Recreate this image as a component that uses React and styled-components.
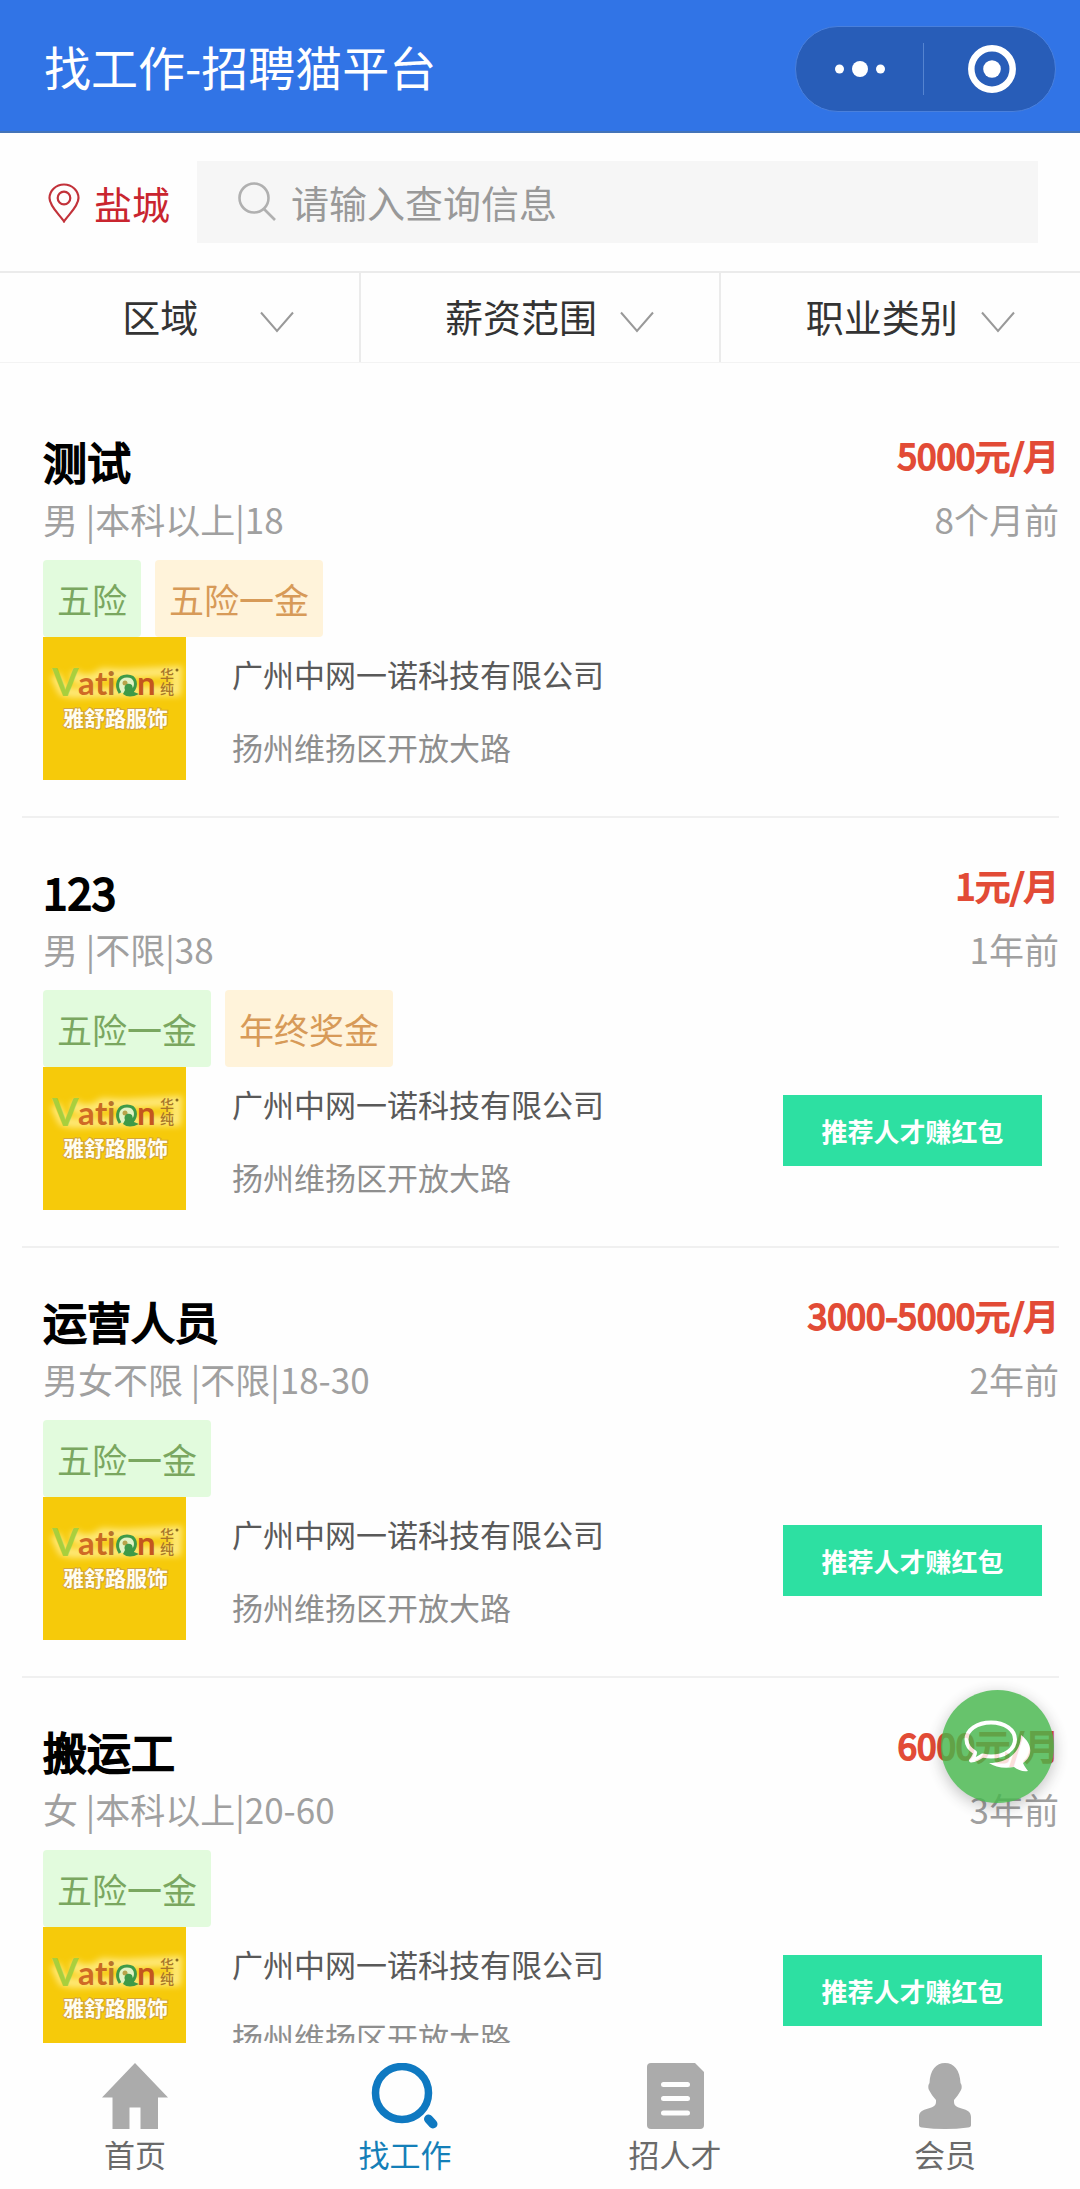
import React from 'react';
import styled, { createGlobalStyle } from 'styled-components';

const GlobalStyle = createGlobalStyle`
  * {
    box-sizing: border-box;
  }

  body {
    margin: 0;
    background-color: #fefefe;
    font-family: 'Noto Sans CJK SC', 'Noto Sans', sans-serif;
  }

  button, input {
    font-family: inherit;
  }
`;

const Page = styled.div`
  display: flex;
  flex-direction: column;
  height: 100vh;
  overflow: hidden;
`;

const Header = styled.header`
  display: flex;
  flex-shrink: 0;
  align-items: center;
  justify-content: space-between;
  height: 133px;
  padding: 0 24px 0 44px;
  background-color: #3174e6;
  border-bottom: 2px solid #4373b8;
`;

const HeaderTitle = styled.h1`
  margin: 0;
  color: #fff;
  font-size: 47px;
  font-weight: 400;
  line-height: 64px;
`;

const Capsule = styled.div`
  display: flex;
  align-items: center;
  width: 261px;
  height: 86px;
  margin-top: 6px;
  background-color: #285db8;
  border: 1px solid #4a80dc;
  border-radius: 43px;
`;

const CapsuleButton = styled.button`
  display: flex;
  flex: 1;
  align-items: center;
  justify-content: center;
  height: 52px;
  padding: 0;
  background: none;
  border: none;
  cursor: pointer;

  & + & {
    padding-left: 4px;
    border-left: 1px solid #5584d0;
  }
`;

const SearchBar = styled.div`
  display: flex;
  flex-shrink: 0;
  align-items: center;
  height: 138px;
  padding: 0 42px 0 48px;
`;

const City = styled.button`
  display: flex;
  align-items: center;
  gap: 14px;
  width: 149px;
  padding: 2px 0 0;
  background: none;
  border: none;
  color: #c9252f;
  font-size: 38px;
  line-height: 56px;
  cursor: pointer;
`;

const SearchBox = styled.label`
  display: flex;
  flex: 1;
  align-items: center;
  gap: 14px;
  height: 82px;
  padding: 0 40px 2px;
  background-color: #f6f6f6;
`;

const SearchInput = styled.input`
  flex: 1;
  min-width: 0;
  height: 56px;
  padding: 0;
  background: none;
  border: none;
  outline: none;
  color: #333;
  font-size: 38px;

  &::placeholder {
    color: #999;
    opacity: 1;
  }
`;

const Filters = styled.div`
  display: flex;
  flex-shrink: 0;
  height: 92px;
  border-top: 2px solid #ebebeb;
  border-bottom: 1px solid #f3f3f3;
`;

const FilterButton = styled.button`
  display: flex;
  flex: 1;
  align-items: center;
  padding: 0 65px 4px 61px;
  background: none;
  border: none;
  color: #333;
  font-size: 38px;
  line-height: 56px;
  cursor: pointer;

  &:not(:last-child) {
    border-right: 2px solid #ebebeb;
  }
`;

const FilterLabel = styled.span`
  flex: 1;
  text-align: center;
  white-space: nowrap;
`;

const JobList = styled.main`
  flex: 1;
  min-height: 0;
  padding: 25px 21px 0 22px;
  overflow-y: auto;
  scrollbar-width: none;
`;

const JobCard = styled.article`
  padding: 38px 0 36px 21px;
  border-bottom: 2px solid #f0f0f0;
`;

const JobTop = styled.div`
  display: flex;
  justify-content: space-between;
  margin-bottom: 6px;
`;

const JobTitle = styled.h2`
  margin: 0;
  color: #000;
  font-size: 44px;
  font-weight: 400;
  line-height: 70px;
  -webkit-text-stroke: 2px #000;
`;

const JobMeta = styled.p`
  margin: 0;
  color: #a0a0a0;
  font-size: 35px;
  line-height: 46px;
`;

const JobSide = styled.div`
  font-size: 35px;
  text-align: right;
`;

const Salary = styled.div`
  color: #e24b36;
  line-height: 58px;
  -webkit-text-stroke: 2px #e24b36;
`;

const PostedAt = styled.div`
  color: #a0a0a0;
  line-height: 70px;
`;

const Tags = styled.div`
  display: flex;
  gap: 14px;
`;

const Tag = styled.span`
  padding: 0 14px;
  background-color: ${(props) => (props.$orange ? '#fff3da' : '#e2fbdd')};
  border-radius: 4px;
  color: ${(props) => (props.$orange ? '#d79a58' : '#7aa760')};
  font-size: 35px;
  line-height: 77px;
`;

const CompanyRow = styled.div`
  display: flex;
  align-items: flex-start;
`;

const Logo = styled.svg`
  flex-shrink: 0;
  width: 143px;
  height: 143px;
  background-color: #f6ca0a;
`;

const CompanyInfo = styled.div`
  flex: 1;
  height: 143px;
  margin-left: 46px;
  font-size: 31px;
  line-height: 73px;
`;

const CompanyName = styled.div`
  color: #595959;
`;

const Address = styled.div`
  color: #8e8e8e;
`;

const ReferButton = styled.button`
  width: 259px;
  height: 71px;
  margin: 28px 17px 0 0;
  padding: 0;
  background-color: #2de0a2;
  border: none;
  color: #fff;
  font-size: 26px;
  font-weight: 700;
  cursor: pointer;
`;

const ChatButton = styled.button`
  position: fixed;
  right: 26px;
  bottom: 386px;
  display: flex;
  align-items: center;
  justify-content: center;
  width: 113px;
  height: 113px;
  padding: 0;
  background-color: #46b64c;
  border: none;
  border-radius: 50%;
  box-shadow: 0 4px 16px rgba(0, 0, 0, 0.3);
  opacity: 0.82;
  cursor: pointer;
`;

const TabBar = styled.nav`
  display: flex;
  flex-shrink: 0;
  height: 146px;
  background-color: #fefefe;
`;

const TabLink = styled.a`
  display: flex;
  flex: 1;
  flex-direction: column;
  align-items: center;
  gap: 2px;
  padding-top: 20px;
  color: ${(props) => (props.$active ? '#147fb8' : '#6a6a6a')};
  font-size: 31px;
  line-height: 46px;
  text-decoration: none;
`;

const jobs = [
  { id: 1, title: '测试', meta: '男 |本科以上|18', salary: '5000元/月', posted: '8个月前', tags: ['五险', '五险一金'], refer: false },
  { id: 2, title: '123', meta: '男 |不限|38', salary: '1元/月', posted: '1年前', tags: ['五险一金', '年终奖金'], refer: true },
  { id: 3, title: '运营人员', meta: '男女不限 |不限|18-30', salary: '3000-5000元/月', posted: '2年前', tags: ['五险一金'], refer: true },
  { id: 4, title: '搬运工', meta: '女 |本科以上|20-60', salary: '6000元/月', posted: '3年前', tags: ['五险一金'], refer: true },
];

const filters = ['区域', '薪资范围', '职业类别'];

const HomeIcon = () => (
  <svg width="66" height="66" viewBox="0 0 66 66" fill="#ababab">
    <path d="M33 0L66 34.500H56V67H38.500V44.500H27.500V67H10.500V34.500H0Z" />
  </svg>
);

const FindIcon = () => (
  <svg width="68" height="66" viewBox="0 0 68 66" fill="none" stroke="#0f79c1">
    <circle cx="31" cy="30" r="26.500" strokeWidth="7.500" />
    <path d="M57.500 56L62 61" strokeWidth="9" strokeLinecap="round" />
  </svg>
);

const ResumeIcon = () => (
  <svg width="57" height="66" viewBox="0 0 57 66">
    <path d="M4 0H48L57 9V62Q57 66 53 66H4Q0 66 0 62V4Q0 0 4 0Z" fill="#ababab" />
    <path d="M16.500 21.500H40.500M16.500 35.500H40.500M16.500 50H40.500" stroke="#fefefe" strokeWidth="5" strokeLinecap="round" />
  </svg>
);

const MemberIcon = () => (
  <svg width="52" height="66" viewBox="0 0 52 66" fill="#ababab">
    <path d="M26 0C35 0 41 7 41.500 20C43 22 43 25 42 27C40 31 37.500 34 35 37V39C35 48 52 43 52 54V62Q52 64 49 64.500Q26 67.500 3 64.500Q0 64 0 62V54C0 43 17 48 17 39V37C14.500 34 12 31 10 27C9 25 9 22 10.500 20C11 7 17 0 26 0Z" />
  </svg>
);

const tabs = [
  { id: 'home', label: '首页', Icon: HomeIcon },
  { id: 'find', label: '找工作', Icon: FindIcon },
  { id: 'hire', label: '招人才', Icon: ResumeIcon },
  { id: 'member', label: '会员', Icon: MemberIcon },
];

const Chevron = () => (
  <svg width="34" height="34" viewBox="0 -12 34 34" fill="none" stroke="#999" strokeWidth="2">
    <path d="M1 1.500L17 20L33 1.500" />
  </svg>
);

const CompanyLogo = () => (
  <Logo viewBox="0 0 143 143" role="img" aria-label="雅舒路服饰">
    <defs>
      <filter id="glow" x="-20%" y="-50%" width="140%" height="200%">
        <feGaussianBlur stdDeviation="3" />
      </filter>
    </defs>
    <path d="M12 38L20 54L30 56L112 54L133 54L134 34L80 37L60 36L50 42L34 42L31 35" fill="none" stroke="#ffe978" strokeWidth="10" filter="url(#glow)" />
    <g fontFamily="Lato, sans-serif" fontWeight="700" fontSize="33">
      <text x="9" y="59" fontSize="38" fill="#a9cf3c">V</text>
      <text x="35" y="58" fill="#cf6a25">a</text>
      <text x="52" y="58" fill="#c96a22">t</text>
      <text x="64" y="58" fill="#b9752b">i</text>
      <text x="94" y="58" fill="#c4561f">n</text>
    </g>
    <path d="M77 56C72 48 75 39 84 39C93 39 95 48 89 55" fill="#e2f3c4" stroke="#3f9a48" strokeWidth="3" />
    <circle cx="82" cy="46" r="2.500" fill="#b7a34a" />
    <path d="M82 53C80 48 85 45 89 48L91 55L96 57Q86 62 80 57Z" fill="#3f9a48" />
    <g fontFamily="'Noto Sans CJK SC', sans-serif" fontWeight="500" fontSize="14" fill="#a8752a">
      <text x="117" y="43">华</text>
      <text x="117" y="57">纯</text>
    </g>
    <circle cx="134" cy="33" r="1.500" fill="#8b6a20" />
    <text x="20" y="89" fontFamily="'Noto Sans CJK SC', sans-serif" fontWeight="700" fontSize="21" fill="#fffdf2" stroke="#d3a53a" strokeWidth="2" paintOrder="stroke">
      雅舒路服饰
    </text>
  </Logo>
);

const Job = ({ job }) => (
  <JobCard>
    <JobTop>
      <div>
        <JobTitle>{job.title}</JobTitle>
        <JobMeta>{job.meta}</JobMeta>
      </div>
      <JobSide>
        <Salary>{job.salary}</Salary>
        <PostedAt>{job.posted}</PostedAt>
      </JobSide>
    </JobTop>
    <Tags>
      {job.tags.map((tag, index) => (
        <Tag key={tag} $orange={index % 2 === 1}>{tag}</Tag>
      ))}
    </Tags>
    <CompanyRow>
      <CompanyLogo />
      <CompanyInfo>
        <CompanyName>广州中网一诺科技有限公司</CompanyName>
        <Address>扬州维扬区开放大路</Address>
      </CompanyInfo>
      {job.refer && <ReferButton type="button">推荐人才赚红包</ReferButton>}
    </CompanyRow>
  </JobCard>
);

const App = () => (
  <>
    <GlobalStyle />
    <Page>
      <Header>
        <HeaderTitle>找工作-招聘猫平台</HeaderTitle>
        <Capsule>
          <CapsuleButton type="button" aria-label="更多">
            <svg width="52" height="18" viewBox="0 0 52 18" fill="#fff">
              <circle cx="5.500" cy="9" r="4.500" />
              <circle cx="26" cy="9" r="8" />
              <circle cx="46.500" cy="9" r="4.500" />
            </svg>
          </CapsuleButton>
          <CapsuleButton type="button" aria-label="关闭">
            <svg width="48" height="48" viewBox="0 0 48 48">
              <circle cx="24" cy="24" r="20.700" fill="none" stroke="#fff" strokeWidth="6.500" />
              <circle cx="24" cy="24" r="8.800" fill="#fff" />
            </svg>
          </CapsuleButton>
        </Capsule>
      </Header>

      <SearchBar>
        <City type="button">
          <svg width="32" height="40" viewBox="0 0 32 40" fill="none" stroke="#c2323a" strokeWidth="2.200">
            <path d="M16 38.500C12 32 1.500 23.500 1.500 15A14.500 13.500 0 0 1 30.500 15C30.500 23.500 20 32 16 38.500Z" />
            <circle cx="16" cy="15" r="6.300" />
          </svg>
          盐城
        </City>
        <SearchBox>
          <svg width="40" height="40" viewBox="0 0 40 40" fill="none" stroke="#b0b0b0" strokeWidth="2.600">
            <circle cx="17" cy="17" r="14.500" />
            <path d="M27 28L38 39" />
          </svg>
          <SearchInput type="text" placeholder="请输入查询信息" aria-label="请输入查询信息" />
        </SearchBox>
      </SearchBar>

      <Filters>
        {filters.map((filter) => (
          <FilterButton key={filter} type="button">
            <FilterLabel>{filter}</FilterLabel>
            <Chevron />
          </FilterButton>
        ))}
      </Filters>

      <JobList>
        {jobs.map((job) => (
          <Job key={job.id} job={job} />
        ))}
      </JobList>

      <TabBar>
        {tabs.map(({ id, label, Icon }) => (
          <TabLink key={id} href={`#${id}`} $active={id === 'find'}>
            <Icon />
            {label}
          </TabLink>
        ))}
      </TabBar>

      <ChatButton type="button" aria-label="在线咨询">
        <svg width="68" height="54" viewBox="0 0 68 54">
          <path d="M57 15C69 24 69 36 59 43C60 46 62 48 64 51C59 52 54 50 50 47C40 49 31 47 25 43C43 43 57 33 57 15Z" fill="#fff" />
          <path d="M27 2.500C41 2.500 51 10 51 19.500C51 29 41 36.500 27 36.500C24 36.500 21 36 18.500 35.500C15 38 11 40 7 40.500C9 38 11 35.500 11 32.500C6 29.500 2.500 25 2.500 19.500C2.500 10 13 2.500 27 2.500Z" fill="none" stroke="#fff" strokeWidth="4" strokeLinejoin="round" />
        </svg>
      </ChatButton>
    </Page>
  </>
);

export default App;
